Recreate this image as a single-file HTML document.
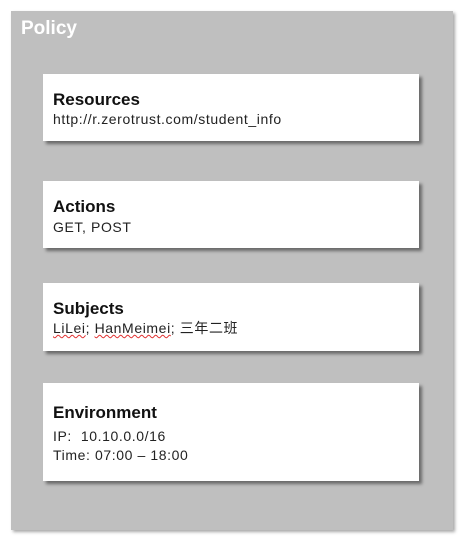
<!DOCTYPE html>
<html><head><style>
body{margin:0;width:471px;height:547px;background:#fff;position:relative;font-family:"Liberation Sans","Noto Sans CJK SC",sans-serif;overflow:hidden}
.outer{position:absolute;left:11px;top:11px;width:442px;height:519px;background:#bfbfbf;box-shadow:2px 2px 3px rgba(0,0,0,.35)}
.t{position:absolute;left:21px;top:18px;color:#fff;font-weight:bold;font-size:19px}
.c{position:absolute;left:43px;width:376px;background:#fff;box-shadow:3px 3px 3px rgba(0,0,0,.45)}
.c .h{position:absolute;left:10px;font-weight:bold;font-size:17px;color:#111}
.c .b{position:absolute;left:10px;font-size:14px;letter-spacing:0.6px;color:#222;line-height:19px}
.u{text-decoration:underline wavy #e03030;text-decoration-thickness:1px}
</style></head><body>
<div class="outer"></div>
<div class="t">Policy</div>
<div class="c" style="top:74px;height:67px"><div class="h" style="top:16px">Resources</div><div class="b" style="top:36px">http://r.zerotrust.com/student_info</div></div>
<div class="c" style="top:181px;height:67px"><div class="h" style="top:16px">Actions</div><div class="b" style="top:37px">GET, POST</div></div>
<div class="c" style="top:283px;height:68px"><div class="h" style="top:16px">Subjects</div><div class="b" style="top:36px"><span class="u">LiLei</span>; <span class="u">HanMeimei</span>; 三年二班</div></div>
<div class="c" style="top:383px;height:98px"><div class="h" style="top:20px">Environment</div><div class="b" style="top:44px">IP:&nbsp;&nbsp;10.10.0.0/16<br>Time: 07:00 – 18:00</div></div>
</body></html>
